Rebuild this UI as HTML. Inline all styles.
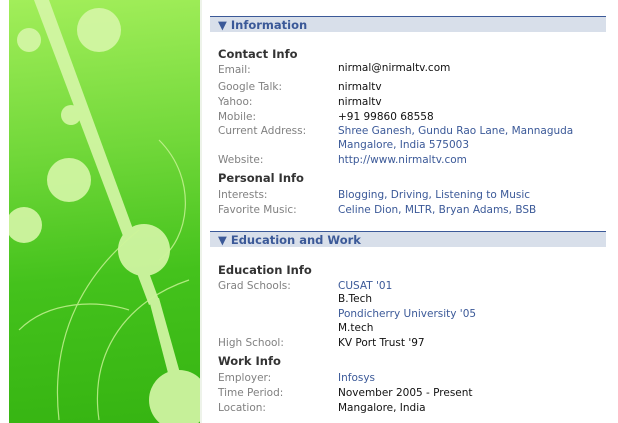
<!DOCTYPE html>
<html><head><meta charset="utf-8"><style>
body{margin:0;width:618px;height:423px;overflow:hidden;background:#fff;font-family:"DejaVu Sans","Liberation Sans",sans-serif;font-size:10.5px;position:relative}
.img{position:absolute;left:9px;top:0;width:191px;height:423px;background:linear-gradient(175deg,#a2ee5a 0%,#72d83a 35%,#44c21c 65%,#36b412 100%);overflow:hidden}
.sep{position:absolute;left:200px;top:0;width:2px;height:423px;background:#eef3ea}
.bar{position:absolute;left:210px;width:396px;height:16px;border-top:1px solid #3b5998;background:#d8dfea;color:#3b5998;font-weight:bold;font-size:11.5px;line-height:16px;padding-left:8px;box-sizing:border-box}
.t{position:absolute;white-space:nowrap;line-height:14px}
.h{left:218px;font-weight:bold;color:#333;font-size:11.5px}
.l{left:218px;color:#808080}
.v{left:338px;color:#111}
.a{left:338px;color:#3b5998}
</style></head><body>
<div class="img"><svg width="191" height="423" viewBox="0 0 191 423">
<g fill="#d6f7a8" opacity="0.9">
<path d="M25 0 L40 0 L150 300 L140 305 Z"/>
<path d="M140 300 L150 298 L185 423 L172 423 Z"/>
<circle cx="90" cy="30" r="22"/><circle cx="60" cy="180" r="22"/><circle cx="62" cy="115" r="10"/>
<circle cx="15" cy="225" r="18"/><circle cx="135" cy="250" r="26"/><circle cx="170" cy="400" r="30"/>
<circle cx="20" cy="40" r="12"/>
</g>
<g fill="none" stroke="#cdf59a" stroke-width="1.2" opacity="0.8">
<path d="M50 420 C40 330 80 270 130 230"/><path d="M90 420 C80 350 120 300 180 280"/>
<path d="M150 140 C190 180 180 240 150 260"/><path d="M10 330 C40 300 90 300 120 310"/>
</g></svg></div>
<div class="sep"></div>
<div class="bar" style="top:16px">▼ Information</div>
<div class="t h" style="top:47px">Contact Info</div>
<div class="t l" style="top:63px">Email:</div><div class="t v" style="top:61px">nirmal@nirmaltv.com</div>
<div class="t l" style="top:80px">Google Talk:</div><div class="t v" style="top:80px">nirmaltv</div>
<div class="t l" style="top:95px">Yahoo:</div><div class="t v" style="top:95px">nirmaltv</div>
<div class="t l" style="top:110px">Mobile:</div><div class="t v" style="top:110px">+91 99860 68558</div>
<div class="t l" style="top:124px">Current Address:</div><div class="t a" style="top:124px">Shree Ganesh, Gundu Rao Lane, Mannaguda<br>Mangalore, India 575003</div>
<div class="t l" style="top:153px">Website:</div><div class="t a" style="top:153px">http://www.nirmaltv.com</div>
<div class="t h" style="top:171px">Personal Info</div>
<div class="t l" style="top:188px">Interests:</div><div class="t a" style="top:188px">Blogging, Driving, Listening to Music</div>
<div class="t l" style="top:203px">Favorite Music:</div><div class="t a" style="top:203px">Celine Dion, MLTR, Bryan Adams, BSB</div>
<div class="bar" style="top:231px">▼ Education and Work</div>
<div class="t h" style="top:263px">Education Info</div>
<div class="t l" style="top:279px">Grad Schools:</div><div class="t a" style="top:279px">CUSAT '01</div>
<div class="t v" style="top:292px">B.Tech</div>
<div class="t a" style="top:307px">Pondicherry University '05</div>
<div class="t v" style="top:321px">M.tech</div>
<div class="t l" style="top:336px">High School:</div><div class="t v" style="top:336px">KV Port Trust '97</div>
<div class="t h" style="top:354px">Work Info</div>
<div class="t l" style="top:371px">Employer:</div><div class="t a" style="top:371px">Infosys</div>
<div class="t l" style="top:386px">Time Period:</div><div class="t v" style="top:386px">November 2005 - Present</div>
<div class="t l" style="top:401px">Location:</div><div class="t v" style="top:401px">Mangalore, India</div>
</body></html>
